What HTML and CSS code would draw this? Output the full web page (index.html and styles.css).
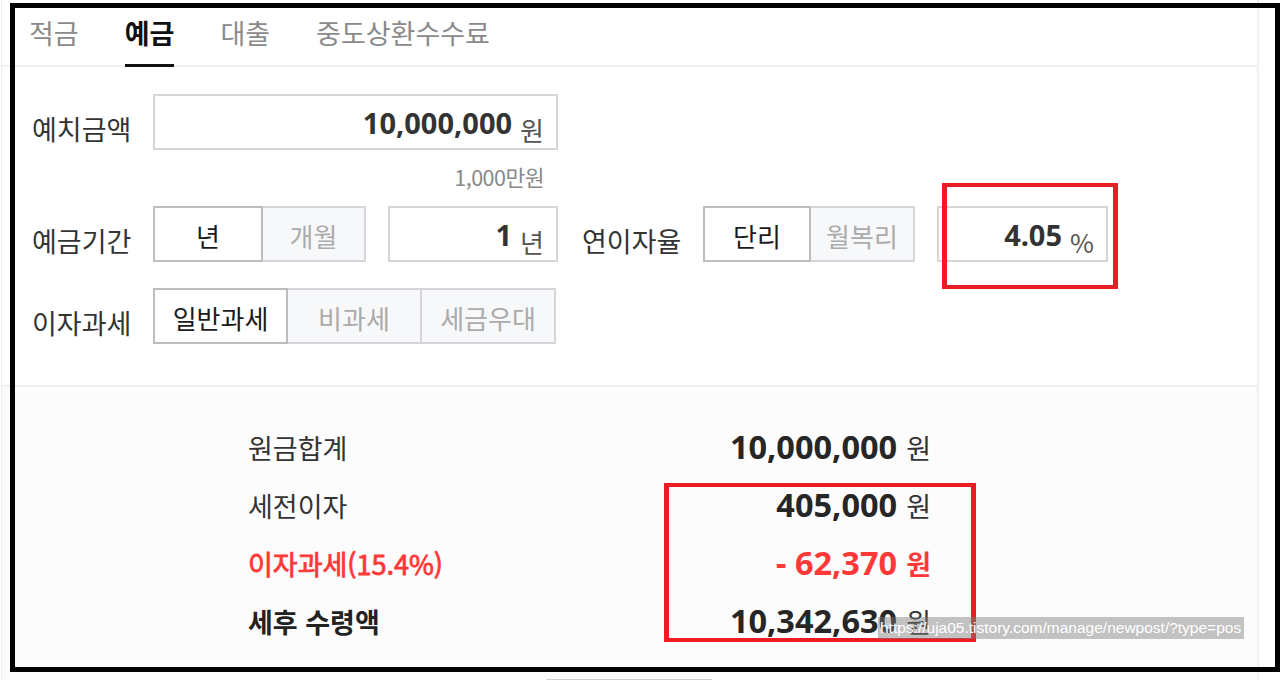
FILE: index.html
```html
<!DOCTYPE html>
<html lang="ko">
<head>
<meta charset="utf-8">
<title>예금 계산기</title>
<link rel="stylesheet" href="styles.css">
</head>
<body>
<div class="card">
  <nav class="tabs">
    <span class="tab">적금</span>
    <span class="tab active">예금</span>
    <span class="tab">대출</span>
    <span class="tab">중도상환수수료</span>
  </nav>

  <section class="form">
    <div class="row">
      <span class="label">예치금액</span>
      <div class="field w-amount"><span class="val">10,000,000</span><span class="unit">원</span></div>
    </div>
    <div class="hint">1,000만원</div>
    <div class="row">
      <span class="label">예금기간</span>
      <div class="seg">
        <span class="opt on w-110">년</span>
        <span class="opt w-105">개월</span>
      </div>
      <div class="field w-period"><span class="val">1</span><span class="unit">년</span></div>
      <span class="label label-rate">연이자율</span>
      <div class="seg">
        <span class="opt on w-108">단리</span>
        <span class="opt w-106">월복리</span>
      </div>
      <div class="field w-rate"><span class="val">4.05</span><span class="unit">%</span></div>
    </div>
    <div class="row row-gap">
      <span class="label">이자과세</span>
      <div class="seg">
        <span class="opt on w-135">일반과세</span>
        <span class="opt w-136">비과세</span>
        <span class="opt w-136">세금우대</span>
      </div>
    </div>
  </section>

  <section class="result">
    <div class="res-row">
      <span class="res-label">원금합계</span>
      <span class="res-value"><span class="num">10,000,000</span><span class="won">원</span></span>
    </div>
    <div class="res-row">
      <span class="res-label">세전이자</span>
      <span class="res-value"><span class="num">405,000</span><span class="won">원</span></span>
    </div>
    <div class="res-row red">
      <span class="res-label">이자과세(15.4%)</span>
      <span class="res-value"><span class="num">- 62,370</span><span class="won">원</span></span>
    </div>
    <div class="res-row total">
      <span class="res-label">세후 수령액</span>
      <span class="res-value"><span class="num">10,342,630</span><span class="won">원</span></span>
    </div>
    <div class="more"></div>
  </section>
</div>

<div class="frame"></div>
<div class="mark mark-rate"></div>
<div class="mark mark-result"></div>
<div class="status">https://uja05.tistory.com/manage/newpost/?type=pos</div>
</body>
</html>
```

FILE: styles.css
```css
* {
  box-sizing: border-box;
  margin: 0;
  padding: 0;
}

html, body {
  background: #fff;
}

body {
  position: relative;
  width: 1284px;
  height: 680px;
  overflow: hidden;
  font-family: "Noto Sans CJK KR", "Noto Sans", sans-serif;
  color: #333;
}

.card {
  margin-left: 1px;
  width: 1258px;
  height: 680px;
  border-left: 1px solid #efefef;
  border-right: 2px solid #f0f0f0;
  display: flex;
  flex-direction: column;
}

/* tabs */
.tabs {
  display: flex;
  gap: 46px;
  height: 67px;
  padding-left: 27px;
  border-bottom: 2px solid #f1f1f1;
  flex: none;
}

.tab {
  display: flex;
  align-items: center;
  height: 67px;
  margin-bottom: -2px;
  font-size: 27px;
  color: #8a8a8a;
  padding-bottom: 2px;
}

.tab.active {
  color: #111;
  font-weight: 700;
  border-bottom: 3px solid #111;
  padding-bottom: 0;
}

/* form */
.form {
  padding: 27px 0 41px 30px;
  flex: none;
}

.row {
  display: flex;
  align-items: center;
  height: 56px;
}

.row-gap {
  margin-top: 26px;
}

.label {
  width: 121px;
  flex: none;
  font-size: 27px;
  color: #333;
  padding-top: 13px;
  white-space: nowrap;
}

.label-rate {
  margin-left: 24px;
}

.field {
  height: 56px;
  border: 2px solid #d6d6da;
  background: #fff;
  display: flex;
  justify-content: flex-end;
  align-items: center;
  padding-right: 12px;
  flex: none;
}

.w-amount { width: 405px; }
.w-period { width: 170px; margin-left: 22px; }
.w-rate { width: 171px; margin-left: 22px; }

.field .val {
  font-family: "Noto Sans", "Noto Sans CJK KR", sans-serif;
  font-weight: 700;
  font-size: 29px;
  line-height: 1;
  color: #333;
}

.field .unit {
  align-self: flex-end;
  margin-left: 8px;
  margin-bottom: 5px;
  font-size: 26px;
  line-height: 1;
  color: #555;
}

.hint {
  height: 56px;
  width: 512px;
  padding-top: 13px;
  text-align: right;
  font-size: 21.5px;
  line-height: 28px;
  letter-spacing: -0.5px;
  color: #888;
}

/* segmented buttons */
.seg {
  display: flex;
  height: 56px;
  flex: none;
}

.opt {
  height: 56px;
  border: 2px solid #d6d6da;
  background: #f7f8fa;
  color: #ababab;
  font-size: 26px;
  display: flex;
  align-items: center;
  justify-content: center;
  padding-top: 2px;
  margin-left: -2px;
}

.opt:first-child {
  margin-left: 0;
}

.opt.on {
  position: relative;
  z-index: 1;
  background: #fff;
  border-color: #bdbdbd;
  color: #1a1a1a;
}

.w-105 { width: 105px; }
.w-106 { width: 106px; }
.w-108 { width: 108px; }
.w-110 { width: 110px; }
.w-135 { width: 135px; }
.w-136 { width: 136px; }

/* results */
.result {
  flex: 1;
  background: #fcfcfc;
  border-top: 2px solid #f0f0f0;
  padding: 31px 0 0 246px;
}

.res-row {
  display: flex;
  align-items: center;
  justify-content: space-between;
  width: 683px;
  height: 58px;
}

.res-label {
  font-size: 27px;
  color: #333;
  white-space: nowrap;
}

.res-value {
  display: flex;
  align-items: center;
}

.res-value .num {
  font-family: "Noto Sans", "Noto Sans CJK KR", sans-serif;
  font-weight: 700;
  font-size: 32.5px;
  line-height: 1;
  color: #262626;
  white-space: pre;
}

.res-value .won {
  margin-left: 9px;
  font-size: 27px;
  color: #333;
}

.res-row.red .res-label {
  color: #ff3838;
  -webkit-text-stroke: 0.8px #ff3838;
}

.res-row.red .num,
.res-row.red .won {
  color: #ff3838;
}

.res-row.red .won {
  font-weight: 700;
}

.res-row.total .res-label {
  font-weight: 700;
  color: #222;
}

.more {
  margin-top: 29px;
  margin-left: 298px;
  width: 166px;
  height: 10px;
  border-top: 1px solid #d0d0d0;
  background: #fff;
}

/* screenshot annotations (overlays) */
.frame {
  position: absolute;
  left: 10px;
  top: 3px;
  width: 1270px;
  height: 669px;
  border: 5px solid #000;
}

.mark {
  position: absolute;
  border-style: solid;
  border-color: #ec1c24;
  border-width: 4px 5px;
}

.mark-rate {
  left: 942px;
  top: 183px;
  width: 176px;
  height: 106px;
}

.mark-result {
  left: 664px;
  top: 483px;
  width: 312px;
  height: 159px;
}

.status {
  position: absolute;
  left: 878px;
  top: 617px;
  width: 366px;
  height: 22px;
  background: rgba(125, 125, 125, 0.45);
  color: #fff;
  font-family: "Liberation Sans", Arial, sans-serif;
  font-size: 15.5px;
  line-height: 22px;
  padding-left: 2px;
  white-space: nowrap;
  overflow: hidden;
}
```
